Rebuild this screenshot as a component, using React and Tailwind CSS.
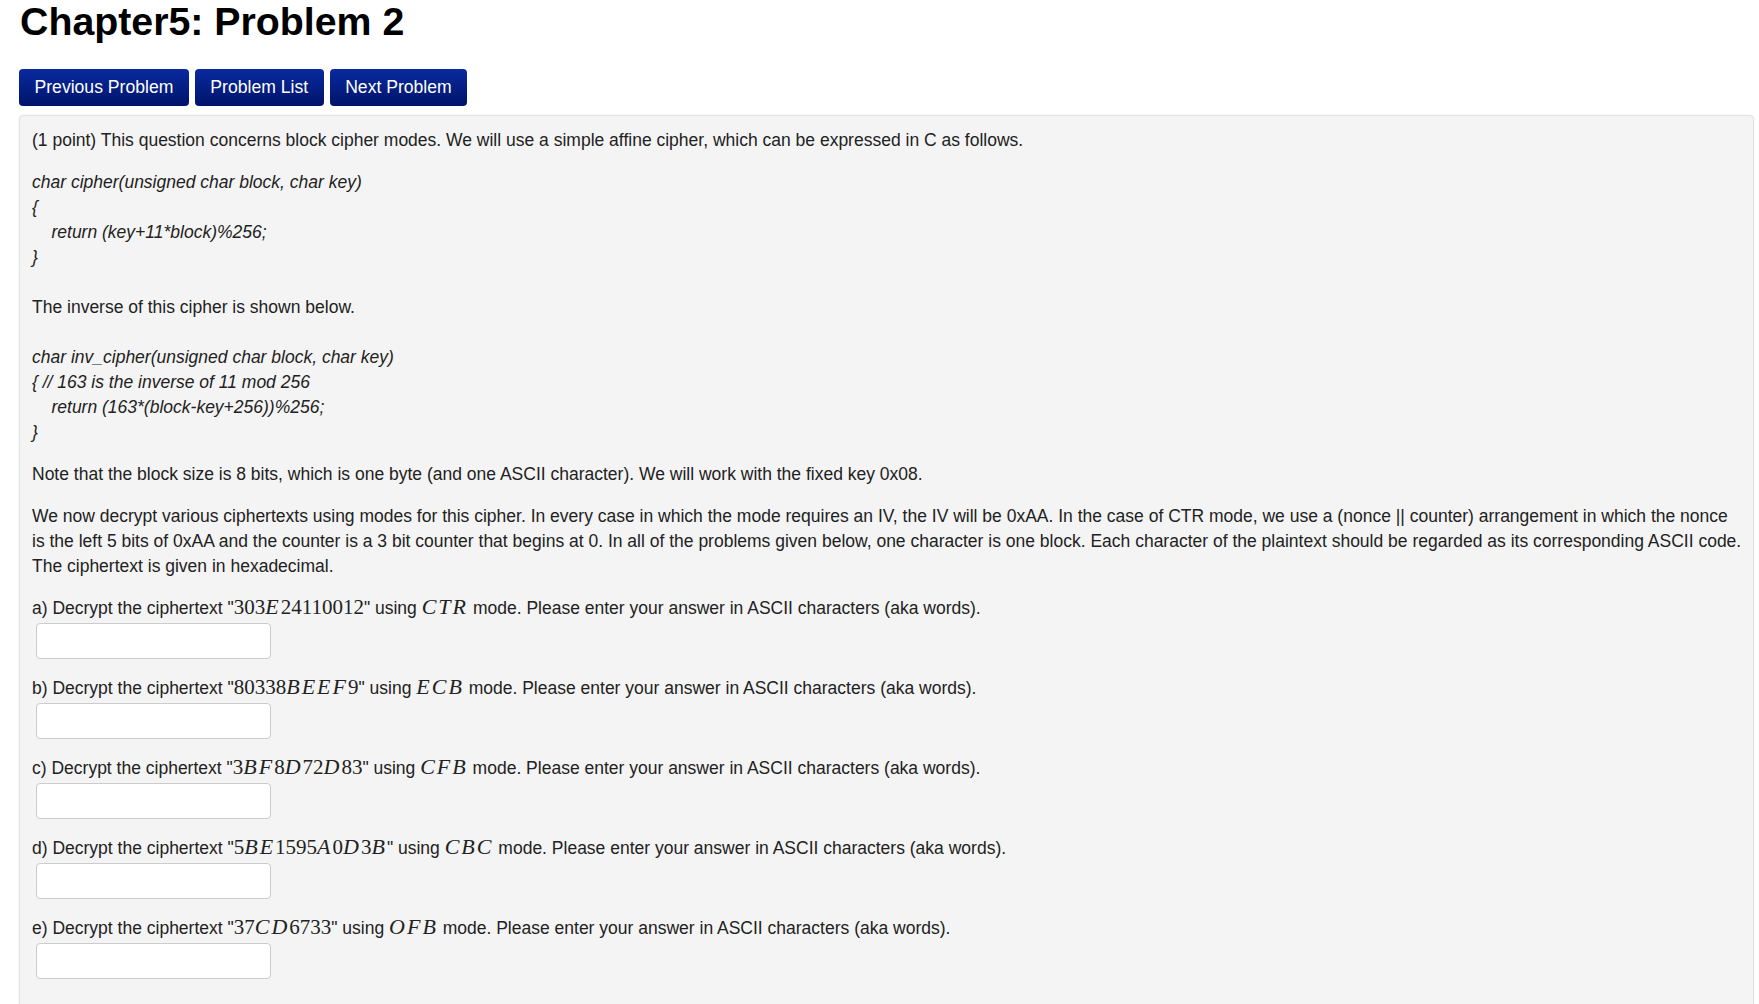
import React from "react";

const sans = { fontFamily: '"Liberation Sans", Arial, sans-serif' };

// MathJax-ish inline math: digits upright, letters italic
function M({ children }) {
  const parts = String(children).split(/([A-Za-z]+)/);
  return (
    <span className="text-[21px] leading-none" style={{ fontFamily: '"Liberation Serif", "Times New Roman", serif' }}>
      {parts.map((p, i) =>
        /[A-Za-z]/.test(p) ? (
          <i key={i} className="text-[22px] tracking-[2px]">{p}</i>
        ) : (
          <span key={i}>{p}</span>
        )
      )}
    </span>
  );
}

const questions = [
  ["a", "303E24110012", "CTR"],
  ["b", "80338BEEF9", "ECB"],
  ["c", "3BF8D72D83", "CFB"],
  ["d", "5BE1595A0D3B", "CBC"],
  ["e", "37CD6733", "OFB"],
];

function NavButton({ children }) {
  return (
    <button className="h-[37px] px-[15.5px] rounded-[4px] bg-linear-to-b from-[#0b2a9f] to-[#00136a] text-white text-[17.6px] leading-none">
      {children}
    </button>
  );
}

export default function App() {
  const nb = "\u00a0\u00a0\u00a0\u00a0";
  return (
    <div className="bg-white min-h-screen text-[#222] text-[17.5px] leading-[25px] overflow-hidden" style={sans}>
      <h1 className="pl-[20px] pt-[1px] text-[39.3px] leading-[40px] font-bold text-black">
        Chapter5: Problem 2
      </h1>
      <div className="flex gap-[6px] pl-[19px] mt-[28px]">
        <NavButton>Previous Problem</NavButton>
        <NavButton>Problem List</NavButton>
        <NavButton>Next Problem</NavButton>
      </div>
      <div className="ml-[19px] mr-[5px] mt-[9px] bg-[#f4f4f4] border border-[#e2e2e2] rounded-[4px] shadow-[0_0_2px_rgba(0,0,0,0.08)] pl-[12px] pr-[10px] pt-[12px] pb-[40px]">
        <p className="mb-[17px]">
          (1 point) This question concerns block cipher modes. We will use a simple affine cipher, which can be expressed in C as follows.
        </p>
        <p>
          <i>char cipher(unsigned char block, char key)</i>
          <br />
          <i>{"{"}</i>
          <br />
          <i>{nb}return (key+11*block)%256;</i>
          <br />
          <i>{"}"}</i>
          <br />
          <br />
          The inverse of this cipher is shown below.
          <br />
          <br />
          <i>char inv_cipher(unsigned char block, char key)</i>
          <br />
          <i>{"{ // 163 is the inverse of 11 mod 256"}</i>
          <br />
          <i>{nb}return (163*(block-key+256))%256;</i>
          <br />
          <i>{"}"}</i>
        </p>
        <p className="mt-[17px] mb-[17px]">
          Note that the block size is 8 bits, which is one byte (and one ASCII character). We will work with the fixed key 0x08.
        </p>
        <p className="mb-[17px]">
          We now decrypt various ciphertexts using modes for this cipher. In every case in which the mode requires an IV, the IV will be 0xAA. In the case of CTR mode, we use a (nonce || counter) arrangement in which the nonce
          <br />
          is the left 5 bits of 0xAA and the counter is a 3 bit counter that begins at 0. In all of the problems given below, one character is one block. Each character of the plaintext should be regarded as its corresponding ASCII code. The ciphertext is given in hexadecimal.
        </p>
        {questions.map(([l, c, m]) => (
          <div key={l} className="mb-[17px]">
            <div className="h-[25px] whitespace-nowrap">
              {l}) Decrypt the ciphertext "<M>{c}</M>" using <M>{m}</M> mode. Please enter your answer in ASCII characters (aka words).
            </div>
            <input
              type="text"
              className="block mt-[2px] ml-[4px] w-[235px] h-[36px] bg-white border border-[#cccccc] rounded-[4px] px-2 outline-none"
            />
          </div>
        ))}
      </div>
    </div>
  );
}
